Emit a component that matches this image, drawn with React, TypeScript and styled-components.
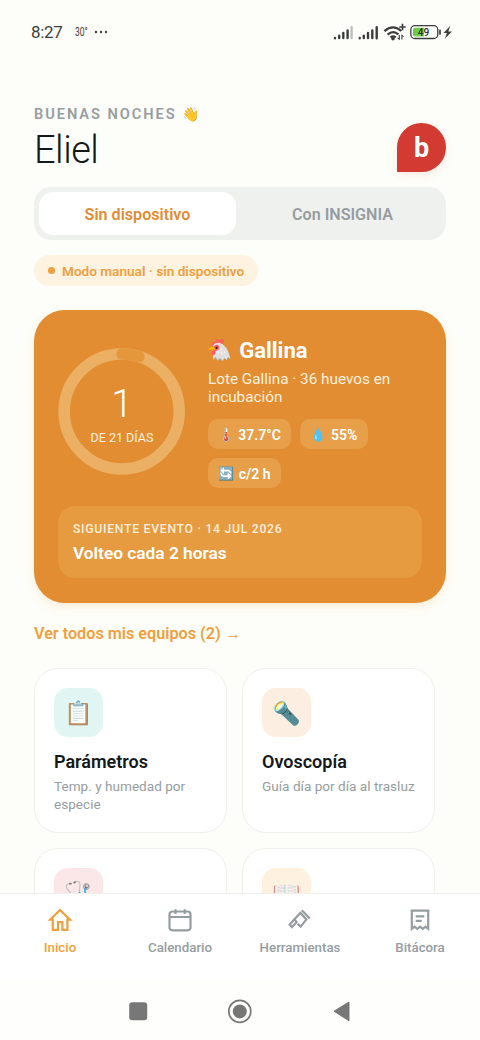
import React from 'react';
import styled, { createGlobalStyle } from 'styled-components';

const Global = createGlobalStyle`
  * { box-sizing: border-box; }
  body { margin: 0; background: #fdfef9; }
  body, button { font-family: Roboto, 'Noto Color Emoji', 'Liberation Sans', sans-serif; }
`;

const Screen = styled.div`
  width: 480px;
  height: 1040px;
  overflow: hidden;
  display: flex;
  flex-direction: column;
  background: #fdfef9;
  color: #15181b;
`;

const StatusBar = styled.div`
  flex: none;
  height: 64px;
  padding: 0 25px 0 31px;
  display: flex;
  align-items: center;
  justify-content: space-between;
  color: #3c3e3d;
`;

const StatusLeft = styled.div`
  display: flex;
  align-items: center;
`;

const Clock = styled.span`
  font-size: 17px;
  font-weight: 450;
  line-height: 20px;
  letter-spacing: -0.3px;
  width: 44px;
`;

const Temperature = styled.span`
  width: 19px;
  font-size: 12.5px;
  line-height: 14px;
  white-space: nowrap;
  transform: scaleX(0.68);
  transform-origin: left center;
`;

const Scroll = styled.main`
  flex: none;
  height: 829px;
  overflow: hidden;
  padding: 39px 34px 0;
  display: flex;
  flex-direction: column;
  > * { flex: none; }
`;

const Header = styled.header`
  display: flex;
  justify-content: space-between;
  height: 84px;
`;

const Greeting = styled.div`
  font-size: 14.6px;
  font-weight: 600;
  line-height: 22px;
  letter-spacing: 1.95px;
  color: #969da1;
`;

const Name = styled.h1`
  margin: 3px 0 0;
  font-size: 38px;
  font-weight: 300;
  line-height: 44px;
  letter-spacing: -0.5px;
`;

const Avatar = styled.div`
  width: 49px;
  height: 49px;
  margin-top: 20px;
  border-radius: 50% 50% 50% 0;
  background: #d33a32;
  color: #fff;
  font-size: 27px;
  font-weight: 700;
  line-height: 50px;
  text-align: center;
  box-shadow: 0 3px 8px rgba(211, 58, 50, 0.1);
`;

const Segmented = styled.div`
  height: 53px;
  padding: 5px;
  display: grid;
  grid-template-columns: 197px 197px;
  justify-content: space-between;
  border-radius: 17px;
  background: #eff1ee;
`;

const Segment = styled.button<{ $active?: boolean }>`
  border: 0;
  padding: 1px 0 0;
  border-radius: 14px;
  font-family: inherit;
  font-size: 16.1px;
  font-weight: 600;
  background: ${(p) => (p.$active ? '#fff' : 'transparent')};
  color: ${(p) => (p.$active ? '#e28c33' : '#969da1')};
`;

const ModeChip = styled.div`
  align-self: flex-start;
  width: 224px;
  height: 31px;
  margin-top: 15px;
  padding-left: 14px;
  display: flex;
  align-items: center;
  gap: 7px;
  border-radius: 16px;
  background: #fef3e1;
  color: #efa03d;
  font-size: 13.6px;
  font-weight: 600;
  white-space: nowrap;
`;

const Dot = styled.i`
  width: 7px;
  height: 7px;
  border-radius: 50%;
  background: #efa03d;
`;

const Batch = styled.section`
  height: 293px;
  margin-top: 24px;
  padding: 24px;
  border-radius: 31px;
  background: #e38d33;
  color: #fff;
  box-shadow: 0 4px 10px rgba(239, 160, 61, 0.17);
`;

const BatchTop = styled.div`
  height: 172px;
  display: flex;
  align-items: flex-start;
  gap: 22px;
`;

const Ring = styled.div`
  flex: none;
  width: 128px;
  height: 128px;
  margin-top: 13px;
  display: grid;
  > * { grid-area: 1 / 1; }
`;

const RingLabel = styled.div`
  display: flex;
  flex-direction: column;
  align-items: center;
  padding-top: 34px;
`;

const Day = styled.span`
  font-size: 39px;
  font-weight: 300;
  line-height: 46px;
`;

const DayTotal = styled.span`
  margin-top: 3px;
  font-size: 12.5px;
  line-height: 15px;
  color: #fdf0de;
`;

const BatchInfo = styled.div`
  flex: 1;
`;

const Species = styled.h2`
  margin: 3px 0 0 -2px;
  display: flex;
  align-items: center;
  gap: 7px;
  font-size: 22px;
  font-weight: 700;
  line-height: 27px;
`;

const Lot = styled.p`
  margin: 6px 0 0;
  font-size: 15.3px;
  line-height: 18px;
  color: #fdf0de;
`;

const Readings = styled.div`
  margin-top: 13px;
  display: flex;
  flex-wrap: wrap;
  gap: 9px;
`;

const Reading = styled.span<{ $w: number }>`
  width: ${(p) => p.$w}px;
  height: 30px;
  padding-top: 1px;
  display: flex;
  align-items: center;
  justify-content: center;
  gap: 4px;
  border-radius: 10px;
  background: #e7a049;
  font-size: 14px;
  font-weight: 600;
`;

const Emoji = styled.span<{ $size: number; $soft?: boolean }>`
  font-family: 'Noto Color Emoji', sans-serif;
  font-size: ${(p) => p.$size}px;
  font-weight: 400;
  line-height: 1;
  letter-spacing: 0;
  opacity: ${(p) => (p.$soft ? 0.82 : 1)};
`;

const NextEvent = styled.div`
  height: 72px;
  padding: 15px 15px 0;
  border-radius: 17px;
  background: #e69b41;
`;

const EventDate = styled.div`
  font-size: 12.2px;
  font-weight: 500;
  line-height: 17px;
  letter-spacing: 0.73px;
  color: #fdeed8;
`;

const EventTitle = styled.div`
  margin-top: 4px;
  font-size: 17.3px;
  font-weight: 600;
  line-height: 22px;
`;

const AllLink = styled.a`
  margin-top: 19px;
  margin-bottom: 1px;
  font-size: 16.2px;
  font-weight: 600;
  line-height: 24px;
  color: #efa03d;
`;

const Tiles = styled.div`
  margin-top: 21px;
  display: grid;
  grid-template-columns: 193px 193px;
  grid-auto-rows: 165px;
  gap: 15px;
`;

const Tile = styled.article`
  padding: 19px 10px 0 19px;
  border: 1px solid #eff0ec;
  border-radius: 24px;
  background: #fff;
`;

const TileIcon = styled.div<{ $tint: string }>`
  width: 49px;
  height: 49px;
  padding-top: 2px;
  display: grid;
  place-items: center;
  border-radius: 14px;
  background: ${(p) => p.$tint};
`;

const TileTitle = styled.h3`
  margin: 13px 0 0;
  font-size: 18px;
  font-weight: 600;
  line-height: 24px;
`;

const TileText = styled.p`
  margin: 3px 0 0;
  font-size: 13.6px;
  line-height: 18px;
  color: #969da1;
`;

const TabBar = styled.nav`
  flex: none;
  height: 87px;
  display: grid;
  grid-template-columns: repeat(4, 1fr);
  border-top: 1px solid #efefeb;
  background: #fff;
`;

const Tab = styled.a<{ $active?: boolean }>`
  display: flex;
  flex-direction: column;
  align-items: center;
  padding-top: 13px;
  font-size: 13.3px;
  font-weight: 500;
  line-height: 16px;
  gap: 7px;
  color: ${(p) => (p.$active ? '#efa03d' : '#969da1')};
`;

const SystemNav = styled.div`
  flex: 1;
  padding-top: 18px;
  display: flex;
  justify-content: center;
  background: #fefefd;
`;

const TabIcon = ({ children }: { children: React.ReactNode }) => (
  <svg width="26" height="26" viewBox="0 0 26 26" fill="none" stroke="currentColor" strokeWidth="2.2">
    {children}
  </svg>
);

const StatusIcons = () => (
  <svg width="122" height="20" viewBox="0 0 122 20" fill="none">
    <g stroke="#3c3e3d" strokeWidth="2.4" strokeLinecap="round">
      <path d="M2 16v.2M6.2 13.8v2.3M10.300 11v5M14.600 8.4v7.700" />
      <path d="M18.600 5.300v10.800" stroke="#bdbfbc" />
      <path d="M26.700 16v.2M30.800 13.800v2.300M35 11v5M39.300 8.400v7.700M43.700 5.200v11" />
    </g>
    <g stroke="#3c3e3d" strokeWidth="2.3">
      <path d="M51.400 9.200Q60 1.700 68.300 9M54.600 12.600q5.600-4.800 10.800-.1M57.400 15.400q2.700-1.900 5.400 0" />
      <path d="M66.300 5h6.400M69.500 1.800v6.400" strokeWidth="1.7" />
      <path d="M66.300 13v4.200l-1.700-1.400M68.900 17.500v-4.200l1.700 1.400" strokeWidth="1.1" />
    </g>
    <circle cx="60" cy="16.800" r="1.8" fill="#3c3e3d" />
    <rect x="77.800" y="3.700" width="27" height="12.800" rx="4" stroke="#3c3e3d" strokeWidth="1.3" />
    <path d="M82 5.800h8.800v8.600H82q-2 0-2-2V7.800q0-2 2-2" fill="#70cb46" />
    <path d="M107 8.300v3.600" stroke="#3c3e3d" strokeWidth="1.7" strokeLinecap="round" />
    <text x="84.800" y="13.800" fontFamily="Roboto, sans-serif" fontSize="10.200" fontWeight="500" fill="#303330">49</text>
    <path d="M117.300 3.800l-6.800 7.200h3.400l-2 5.800 7-7.400h-3.600z" fill="#3c3e3d" />
  </svg>
);

const tiles = [
  { icon: '📋', tint: '#e1f6f2', title: 'Parámetros', text: 'Temp. y humedad por especie' },
  { icon: '🔦', tint: '#fcefe1', title: 'Ovoscopía', text: 'Guía día por día al trasluz' },
  { icon: '🩺', tint: '#fbe7e7', title: '', text: '' },
  { icon: '📖', tint: '#fef1df', title: '', text: '' },
];

export default function App() {
  return (
    <>
      <Global />
      <Screen>
        <StatusBar>
          <StatusLeft>
            <Clock>8:27</Clock>
            <Temperature>30°</Temperature>
            <svg width="15" height="4" viewBox="0 0 15 4" fill="#3c3e3d">
              <circle cx="2" cy="2" r="1.2" />
              <circle cx="7" cy="2" r="1.2" />
              <circle cx="12" cy="2" r="1.2" />
            </svg>
          </StatusLeft>
          <StatusIcons />
        </StatusBar>
        <Scroll>
          <Header>
            <div>
              <Greeting>BUENAS NOCHES <Emoji $size={14}>👋</Emoji></Greeting>
              <Name>Eliel</Name>
            </div>
            <Avatar>b</Avatar>
          </Header>
          <Segmented>
            <Segment $active>Sin dispositivo</Segment>
            <Segment>Con INSIGNIA</Segment>
          </Segmented>
          <ModeChip><Dot />Modo manual · sin dispositivo</ModeChip>
          <Batch>
            <BatchTop>
              <Ring>
                <svg width="128" height="128" viewBox="0 0 128 128" fill="none" strokeWidth="11.5">
                  <circle cx="63.700" cy="64.500" r="57.500" stroke="#ebb063" />
                  <path d="M64 7a57.500 57.500 0 0 1 17 2.600" stroke="#e5973b" strokeLinecap="round" />
                </svg>
                <RingLabel>
                  <Day>1</Day>
                  <DayTotal>DE 21 DÍAS</DayTotal>
                </RingLabel>
              </Ring>
              <BatchInfo>
                <Species><Emoji $size={21}>🐔</Emoji>Gallina</Species>
                <Lot>Lote Gallina · 36 huevos en<br />incubación</Lot>
                <Readings>
                  <Reading $w={83}><Emoji $size={13}>🌡️</Emoji>37.7°C</Reading>
                  <Reading $w={68}><Emoji $size={13}>💧</Emoji>55%</Reading>
                  <Reading $w={73}><Emoji $size={13}>🔄</Emoji>c/2 h</Reading>
                </Readings>
              </BatchInfo>
            </BatchTop>
            <NextEvent>
              <EventDate>SIGUIENTE EVENTO · 14 JUL 2026</EventDate>
              <EventTitle>Volteo cada 2 horas</EventTitle>
            </NextEvent>
          </Batch>
          <AllLink>Ver todos mis equipos (2) →</AllLink>
          <Tiles>
            {tiles.map((t) => (
              <Tile key={t.icon}>
                <TileIcon $tint={t.tint}><Emoji $size={23} $soft>{t.icon}</Emoji></TileIcon>
                <TileTitle>{t.title}</TileTitle>
                <TileText>{t.text}</TileText>
              </Tile>
            ))}
          </Tiles>
        </Scroll>
        <TabBar>
          <Tab $active>
            <TabIcon><path d="M13 3 3.200 12.600h2.600v10.200h5.200v-7.600h4.400v7.600h5V12.600h2.600z" /></TabIcon>
            Inicio
          </Tab>
          <Tab>
            <TabIcon>
              <rect x="2.500" y="4.500" width="21" height="18.800" rx="3" />
              <path d="M2.500 10h21M8.500 2.200V7M17.700 2.200V7" />
            </TabIcon>
            Calendario
          </Tab>
          <Tab>
            <TabIcon>
              <path d="M14.800 3.300l8 8.300" />
              <path d="M7.400 12.200l6-6.300 6 6.500-5.800 7.200-3-2.700M7.400 12.200l-4.800 5.600 2.300 2.300 4.700-4.900z" />
            </TabIcon>
            Herramientas
          </Tab>
          <Tab>
            <TabIcon>
              <path d="M4.800 21.800V3.600h16.400v18.200l-2.700-2.200-2.700 2.200-2.700-2.200-2.800 2.200-2.700-2.200z" />
              <path d="M8.700 9.400h8.600M8.700 13.800h6" />
            </TabIcon>
            Bitácora
          </Tab>
        </TabBar>
        <SystemNav>
          <svg width="224" height="28" viewBox="-2 0 224 28" fill="#777">
            <rect x="-0.800" y="4.300" width="18" height="18" rx="3" />
            <circle cx="109.800" cy="13.400" r="11" fill="none" stroke="#777" strokeWidth="1.700" />
            <circle cx="109.800" cy="13.400" r="7" />
            <path d="M204 13.200 219 4v18.800z" stroke="#777" strokeLinejoin="round" />
          </svg>
        </SystemNav>
      </Screen>
    </>
  );
}
